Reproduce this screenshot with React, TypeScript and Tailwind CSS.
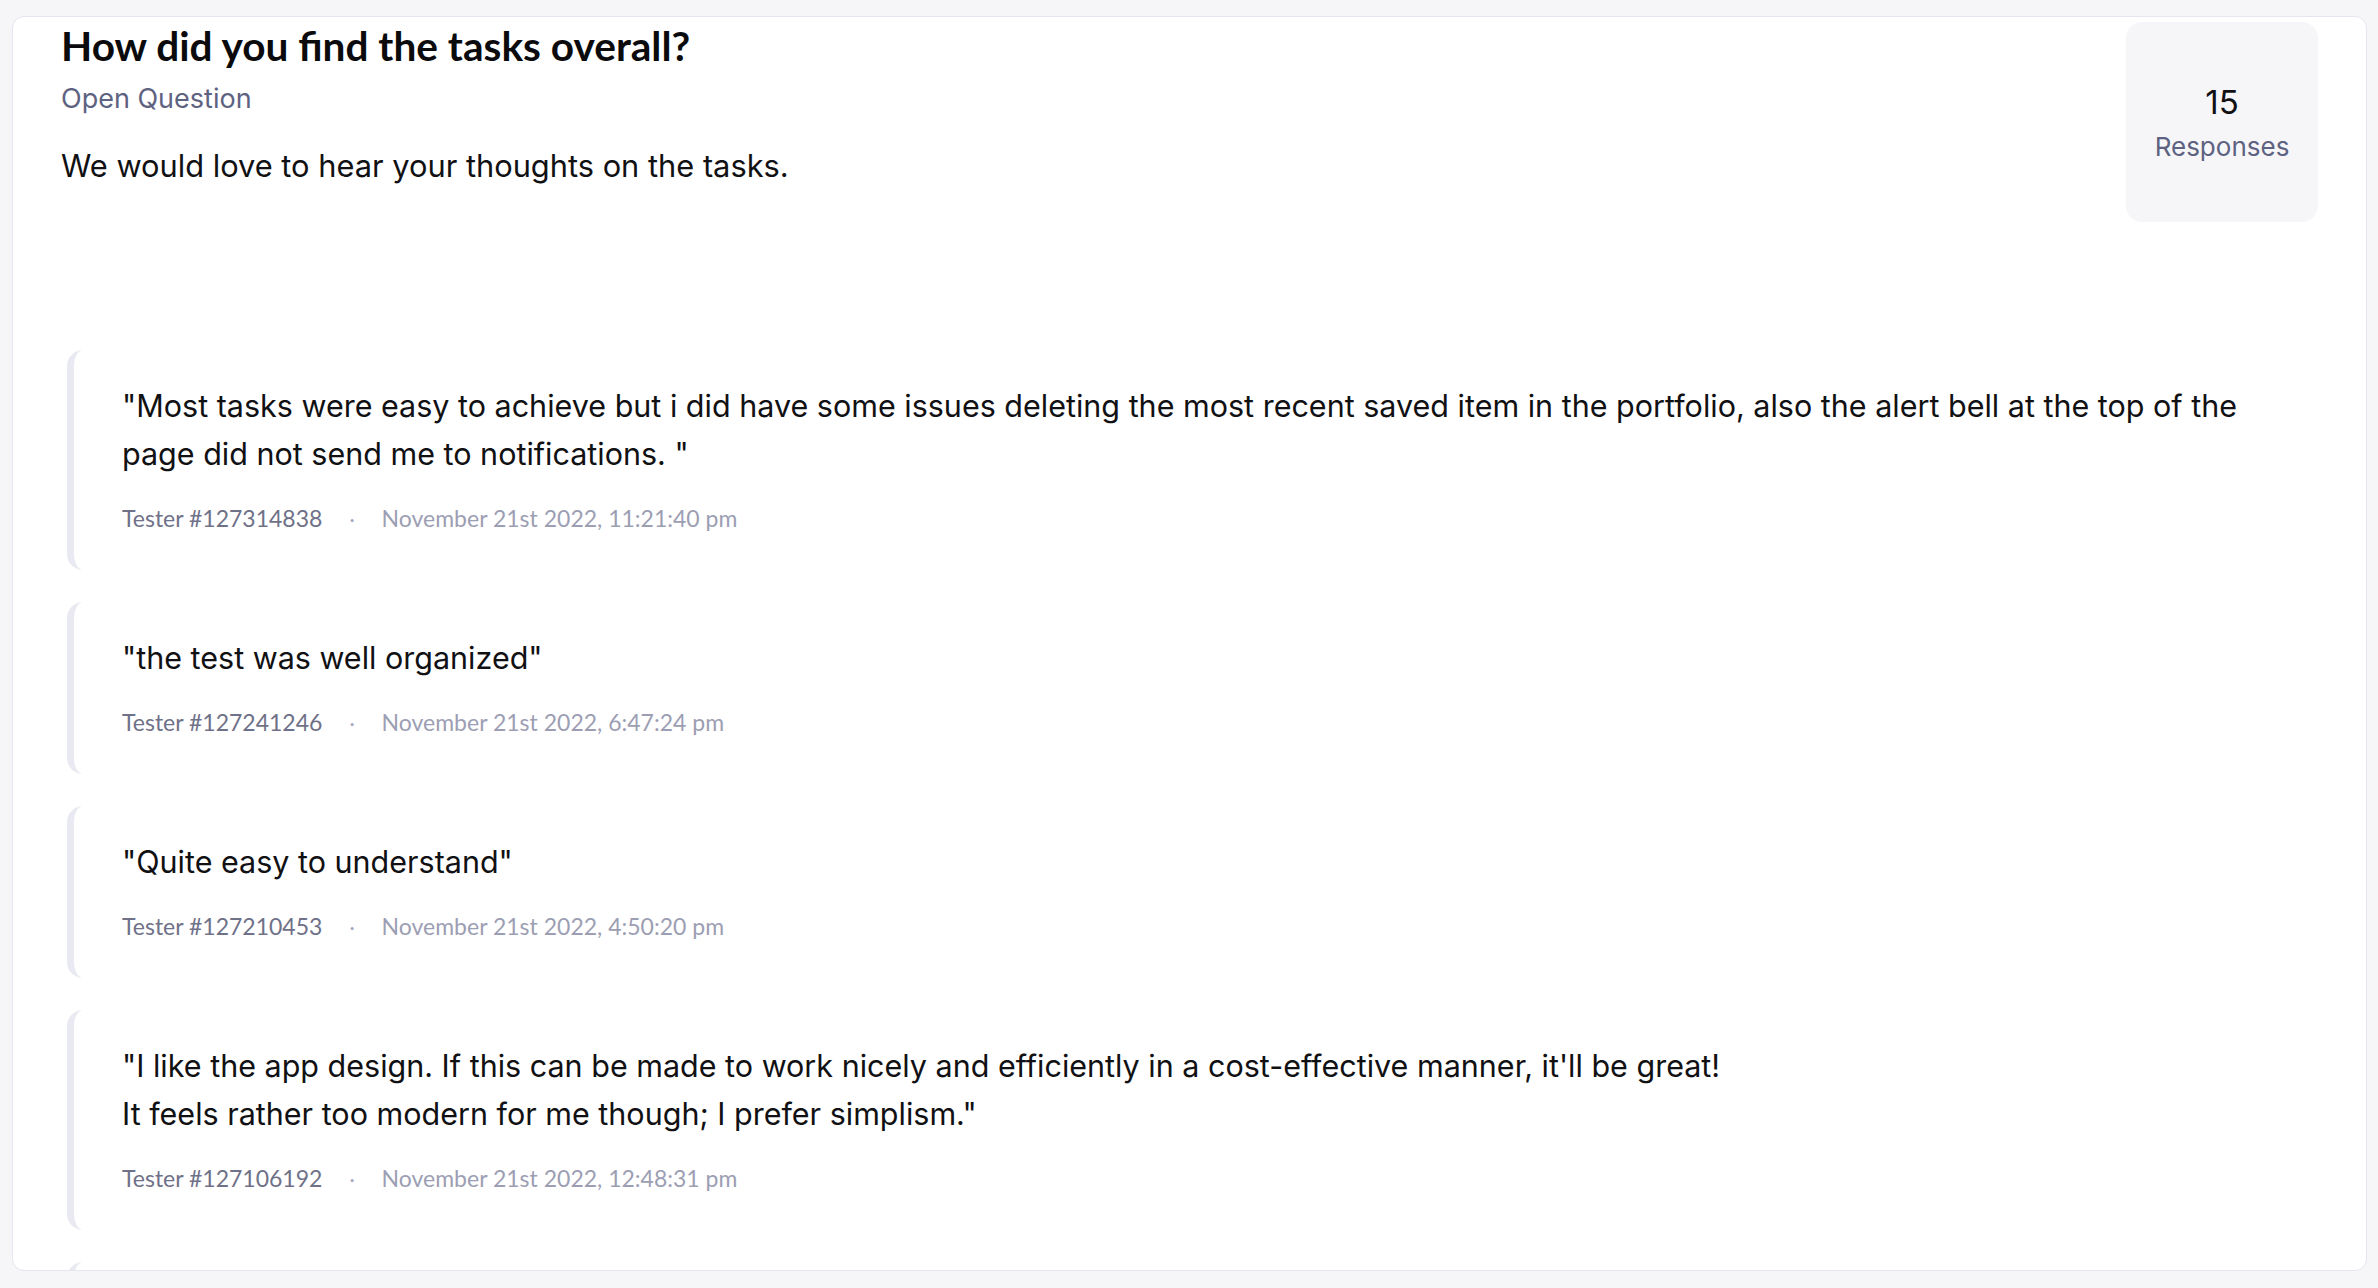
import React from 'react';

type Answer = {
  text: string;
  tester: string;
  date: string;
};

const answers: Answer[] = [
  {
    text: '"Most tasks were easy to achieve but i did have some issues deleting the most recent saved item in the portfolio, also the alert bell at the top of the page did not send me to notifications. "',
    tester: 'Tester #127314838',
    date: 'November 21st 2022, 11:21:40 pm'
  },
  {
    text: '"the test was well organized"',
    tester: 'Tester #127241246',
    date: 'November 21st 2022, 6:47:24 pm'
  },
  {
    text: '"Quite easy to understand"',
    tester: 'Tester #127210453',
    date: 'November 21st 2022, 4:50:20 pm'
  },
  {
    text: '"I like the app design. If this can be made to work nicely and efficiently in a cost-effective manner, it\'ll be great!\nIt feels rather too modern for me though; I prefer simplism."',
    tester: 'Tester #127106192',
    date: 'November 21st 2022, 12:48:31 pm'
  }
];

const body = { fontFamily: 'Inter, "Noto Sans", sans-serif' };
const meta = { fontFamily: 'Lato, "Noto Sans", sans-serif' };

const AnswerQuote: React.FC<{ answer: Answer }> = ({ answer }) => (
  <div className="rounded-2xl border-l-[7px] border-[#e9e9f2] pl-12 pr-4 pt-8 pb-9">
    <p className="whitespace-pre-line text-[30.5px] leading-[48px] text-[#111114]" style={body}>
      {answer.text}
    </p>
    <div className="mt-6 flex items-center text-[23px] leading-[32px]" style={meta}>
      <span className="text-[#6f7188]">{answer.tester}</span>
      <span className="mx-[27px] text-[20px] text-[#a3a5b8]">·</span>
      <span className="text-[#9c9eb3]">{answer.date}</span>
    </div>
  </div>
);

const App: React.FC = () => {
  return (
    <div className="h-screen bg-[#f6f6f9] pt-4 pb-[17px] pl-3 pr-[11px] flex" style={meta}>
      <div className="flex-1 overflow-hidden rounded-xl border border-[#e6e6ef] bg-white px-12 pt-[5px]">
        <div className="flex items-start justify-between">
          <div>
            <h1 className="text-[40.6px] leading-[48px] font-bold text-[#0b0b0e]">
              How did you find the tasks overall?
            </h1>
            <p className="mt-[13px] text-[27px] leading-[31px] text-[#5e6281]" style={body}>
              Open Question
            </p>
            <p className="mt-[34px] text-[30.8px] leading-[36px] text-[#111114]" style={body}>
              We would love to hear your thoughts on the tasks.
            </p>
          </div>
          <div
            className="flex h-[200px] w-[192px] flex-col items-center justify-center rounded-2xl bg-[#f6f6f9]"
            style={body}
          >
            <span className="text-[33px] leading-[40px] text-[#111114]">15</span>
            <span className="mt-[10px] text-[26px] leading-[30px] text-[#5e6281]">Responses</span>
          </div>
        </div>

        <div className="mt-32 ml-[6px] flex flex-col gap-8">
          {answers.map((a) => (
            <AnswerQuote key={a.tester} answer={a} />
          ))}
          {/* next answer, cut off by the scroll area */}
          <div className="h-[120px] rounded-2xl border-l-[7px] border-[#e9e9f2]" />
        </div>
      </div>
    </div>
  );
};

export default App;
